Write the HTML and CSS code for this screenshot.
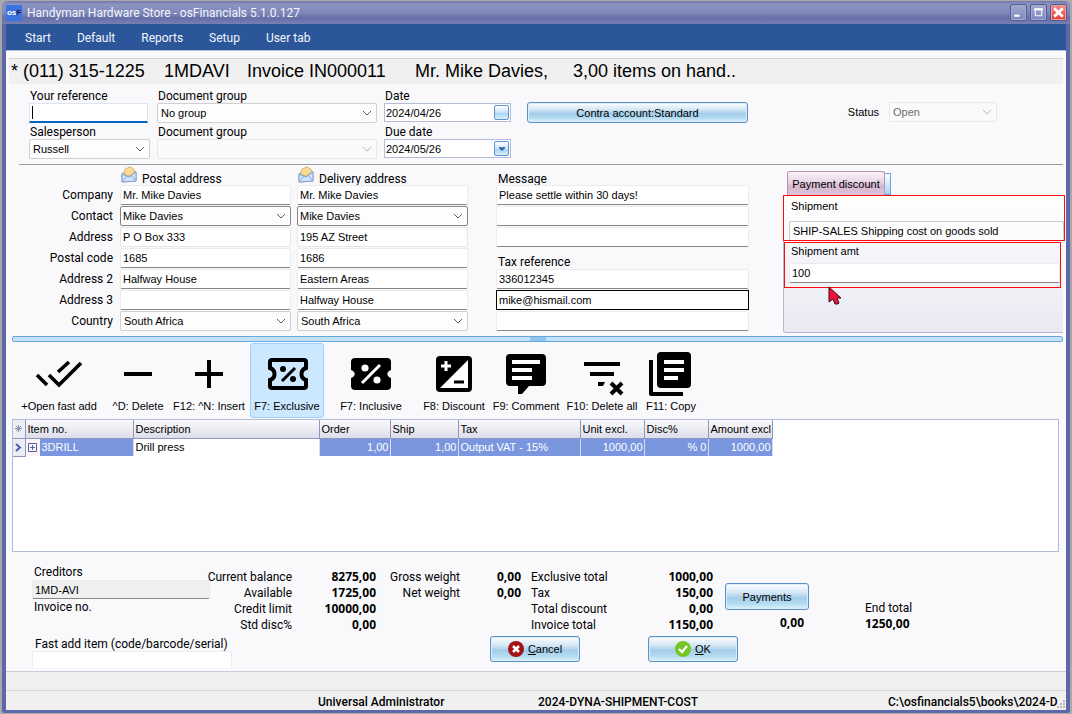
FILE: index.html
```html
<!DOCTYPE html>
<html lang="en">
<head>
<meta charset="utf-8">
<title>Handyman Hardware Store - osFinancials 5.1.0.127</title>
<link rel="stylesheet" href="styles.css">
</head>
<body>
<div class="window">
  <header class="titlebar">
    <span class="app-icon">os<b>F</b></span>
    <h1 class="title">Handyman Hardware Store - osFinancials 5.1.0.127</h1>
    <div class="win-buttons">
      <button class="win-btn" aria-label="Minimize"><svg viewBox="0 0 14 14"><path d="M3 9h5v2H3z" fill="#fff"/></svg></button>
      <button class="win-btn" aria-label="Maximize"><svg viewBox="0 0 14 14"><path d="M4 4h6v6H4z" fill="none" stroke="#fff"/><path d="M3 3h8v2H3z" fill="#fff"/></svg></button>
      <button class="win-btn win-close" aria-label="Close"><svg viewBox="0 0 14 14"><path d="M3 3l8 8M11 3l-8 8" stroke="#fff" stroke-width="2.6"/></svg></button>
    </div>
  </header>
  <nav class="menu">
    <button>Start</button><button>Default</button><button>Reports</button><button>Setup</button><button>User tab</button>
  </nav>

  <main class="content">
    <h2 class="summary-line"><span>*</span><span>(011) 315-1225</span><span>1MDAVI</span><span>Invoice IN000011</span><span>Mr. Mike Davies,</span><span>3,00 items on hand..</span></h2>

    <section class="doc-head">
      <div class="stack">
        <label for="ref">Your reference</label>
        <div class="focus-box"><i class="caret"></i><input id="ref" type="text"></div>
        <label for="sales">Salesperson</label>
        <select id="sales"><option>Russell</option></select>
      </div>
      <div class="stack">
        <label for="grp1">Document group</label>
        <select id="grp1"><option>No group</option></select>
        <label for="grp2">Document group</label>
        <select id="grp2" disabled><option></option></select>
      </div>
      <div class="stack">
        <label for="date">Date</label>
        <div class="date"><input id="date" type="text" value="2024/04/26"><button aria-label="Pick date"></button></div>
        <label for="due">Due date</label>
        <div class="date"><input id="due" type="text" value="2024/05/26"><button aria-label="Pick due date"><svg viewBox="0 0 8 8"><path d="M1 2h2l1 1 1-1h2v1L4 6 1 3z" fill="#2466ad"/></svg></button></div>
      </div>
      <button class="glass contra">Contra account:Standard</button>
      <div class="status">
        <label for="status">Status</label>
        <select id="status" disabled><option>Open</option></select>
      </div>
    </section>

    <section class="address">
      <div class="rows row-labels">
        <span></span>
        <label for="p1">Company</label><label for="p2">Contact</label><label for="p3">Address</label><label for="p4">Postal code</label><label for="p5">Address 2</label><label for="p6">Address 3</label><label for="p7">Country</label>
      </div>
      <div class="rows">
        <h3 class="addr-title"><svg viewBox="0 0 16 17"><path d="M1 8l7-7 7 5v9l-14 1z" fill="#b9d0f0" stroke="#8f9fcf"/><path d="M3 8l1-5 5-2 4 2v4L8 10z" fill="#fbdc95" stroke="#dcae5c" stroke-width=".8"/><path d="M1 8l7 3 7-5v9l-14 1z" fill="#cfe6fa" stroke="#8a9cce"/><path d="M2 15l4-5M14 14l-4-5" stroke="#7aa9dd"/></svg>Postal address</h3>
        <input id="p1" type="text" value="Mr. Mike Davies">
        <select id="p2" class="dark"><option>Mike Davies</option></select>
        <input id="p3" class="light" type="text" value="P O Box 333">
        <input id="p4" type="text" value="1685">
        <input id="p5" type="text" value="Halfway House">
        <input id="p6" type="text">
        <select id="p7"><option>South Africa</option></select>
      </div>
      <div class="rows">
        <h3 class="addr-title"><svg viewBox="0 0 16 17"><path d="M1 8l7-7 7 5v9l-14 1z" fill="#b9d0f0" stroke="#8f9fcf"/><path d="M3 8l1-5 5-2 4 2v4L8 10z" fill="#fbdc95" stroke="#dcae5c" stroke-width=".8"/><path d="M1 8l7 3 7-5v9l-14 1z" fill="#cfe6fa" stroke="#8a9cce"/><path d="M2 15l4-5M14 14l-4-5" stroke="#7aa9dd"/></svg>Delivery address</h3>
        <input type="text" aria-label="Delivery company" value="Mr. Mike Davies">
        <select class="dark" aria-label="Delivery contact"><option>Mike Davies</option></select>
        <input class="light" type="text" aria-label="Delivery address" value="195 AZ Street">
        <input type="text" aria-label="Delivery postal code" value="1686">
        <input type="text" aria-label="Delivery address 2" value="Eastern Areas">
        <input type="text" aria-label="Delivery address 3" value="Halfway House">
        <select aria-label="Delivery country"><option>South Africa</option></select>
      </div>
      <div class="rows message">
        <label class="msg-label" for="msg">Message</label>
        <input id="msg" type="text" value="Please settle within 30 days!">
        <input type="text" aria-label="Message line 2">
        <input type="text" aria-label="Message line 3">
        <label class="msg-label" for="tax">Tax reference</label>
        <input id="tax" type="text" value="336012345">
        <input class="boxed" type="text" aria-label="E-mail" value="mike@hismail.com">
        <input type="text" aria-label="Extra reference">
      </div>
      <div class="discount">
        <div class="tabs"><button class="tab">Payment discount</button><i class="tab-next"></i></div>
        <div class="panel">
          <div class="marked marked-wide"><label for="ship">Shipment</label><input id="ship" class="flat" type="text" value="SHIP-SALES Shipping cost on goods sold"></div>
          <div class="marked marked-short"><label for="amt">Shipment amt</label><input id="amt" type="text" value="100"></div>
          <svg class="cursor" viewBox="0 0 14 20"><path d="M1 1v15l4-3 2 5h3l1-1-2-5h4z" fill="#f5103c" stroke="#301018"/></svg>
        </div>
      </div>
    </section>

    <div class="splitter"><i></i></div>

    <div class="toolbar">
      <button class="w98"><svg viewBox="0 0 48 48"><path d="M2 25l10 10M14 25l10 10L46 13M23 22l11-10" fill="none" stroke="#000" stroke-width="3.6"/></svg>+Open fast add</button>
      <button class="w60"><svg viewBox="0 0 48 48"><path d="M10 22h28v4H10z"/></svg>^D: Delete</button>
      <button class="w82"><svg viewBox="0 0 48 48"><path d="M10 22h12V10h4v12h12v4H26v12h-4V26H10z"/></svg>F12: ^N: Insert</button>
      <button class="w74 active"><svg viewBox="0 0 48 48"><path d="M9 10h32a2 2 0 0 1 2 2v6c-6 2-6 10 0 12v6a2 2 0 0 1-2 2H9a2 2 0 0 1-2-2v-6c6-2 6-10 0-12v-6a2 2 0 0 1 2-2z" fill="none" stroke="#000" stroke-width="4"/><path d="M19 31l13-13" stroke="#000" stroke-width="3"/><circle cx="20" cy="19" r="3"/><circle cx="30" cy="29" r="3"/></svg>F7: Exclusive</button>
      <button class="w94"><svg viewBox="0 0 48 48"><path d="M8 8h32a4 4 0 0 1 4 4v8c-5 2-5 6 0 8v8a4 4 0 0 1-4 4H8a4 4 0 0 1-4-4v-8c5-2 5-6 0-8v-8a4 4 0 0 1 4-4z"/><path d="M15 33l18-18" stroke="#fff" stroke-width="3"/><circle cx="18" cy="18" r="3.6" fill="#fff"/><circle cx="30" cy="30" r="3.6" fill="#fff"/></svg>F7: Inclusive</button>
      <button class="w72"><svg viewBox="0 0 48 48"><rect x="6" y="6" width="36" height="36" rx="4"/><path d="M38 10v28H10z" fill="#fff"/><path d="M11 16h10M16 11v10" stroke="#fff" stroke-width="3"/><path d="M24 32h10" stroke="#000" stroke-width="3"/></svg>F8: Discount</button>
      <button class="w72"><svg viewBox="0 0 48 48"><path d="M8 4h32a4 4 0 0 1 4 4v24a4 4 0 0 1-4 4H27l-7 8h-4v-8H8a4 4 0 0 1-4-4V8a4 4 0 0 1 4-4z"/><path d="M10 10h28v4H10zM10 18h20v4H10zM10 26h20v4H10z" fill="#fff"/></svg>F9: Comment</button>
      <button class="w80"><svg viewBox="0 0 48 48"><path d="M6 12h36v4H6zM12 22h24v4H12zM20 32h7l-2 4h-5z"/><path d="M33 33l11 11M44 33L33 44" stroke="#000" stroke-width="4"/></svg>F10: Delete all</button>
      <button class="w58"><svg viewBox="0 0 48 48"><path d="M14 2h26a4 4 0 0 1 4 4v28a4 4 0 0 1-4 4H14a4 4 0 0 1-4-4V6a4 4 0 0 1 4-4z"/><path d="M2 10h4v32h30v4H4a2 2 0 0 1-2-2z"/><path d="M17 10h20v4H17zM17 18h20v4H17zM17 26h14v4H17z" fill="#fff"/></svg>F11: Copy</button>
    </div>

    <div class="grid-area">
      <table class="items">
        <colgroup><col class="c-mark"><col class="c-item"><col class="c-desc"><col class="c-order"><col class="c-ship"><col class="c-tax"><col class="c-unit"><col class="c-disc"><col class="c-amt"></colgroup>
        <thead><tr><th class="mark"><svg viewBox="0 0 9 9"><path d="M4.5 1v7M1 4.5h7M2 2l5 5M7 2l-5 5" stroke="#8d93ad"/></svg></th><th>Item no.</th><th>Description</th><th>Order</th><th>Ship</th><th>Tax</th><th>Unit excl.</th><th>Disc%</th><th>Amount excl</th></tr></thead>
        <tbody><tr><td class="mark"><svg viewBox="0 0 9 9"><path d="M2 1l4 3.500L2 8" fill="none" stroke="#4a5fb0" stroke-width="2"/></svg></td><td class="item"><span class="item-cell"><button class="expand" aria-label="Expand"><svg viewBox="0 0 9 9"><path d="M.5.5h8v8h-8zM2 4.5h5M4.5 2v5" fill="none" stroke="#5a5f9a"/></svg></button><span>3DRILL</span></span></td><td class="desc">Drill press</td><td class="num">1,00</td><td class="num">1,00</td><td>Output VAT - 15%</td><td class="num">1000,00</td><td class="num">% 0</td><td class="num">1000,00</td></tr></tbody>
      </table>
    </div>

    <section class="totals">
      <div class="creditor">
        <label for="cred">Creditors</label>
        <input id="cred" type="text" value="1MD-AVI" readonly>
        <span>Invoice no.</span>
      </div>
      <dl class="balance"><dt>Current balance</dt><dd>8275,00</dd><dt>Available</dt><dd>1725,00</dd><dt>Credit limit</dt><dd>10000,00</dd><dt>Std disc%</dt><dd>0,00</dd></dl>
      <dl class="weights"><dt>Gross weight</dt><dd>0,00</dd><dt>Net weight</dt><dd>0,00</dd></dl>
      <dl class="amounts"><dt>Exclusive total</dt><dd>1000,00</dd><dt>Tax</dt><dd>150,00</dd><dt>Total discount</dt><dd>0,00</dd><dt>Invoice total</dt><dd>1150,00</dd></dl>
      <div class="payments"><button class="glass">Payments</button><b>0,00</b></div>
      <div class="end-total"><span>End total</span><b>1250,00</b></div>
    </section>

    <section class="actions">
      <div class="fast-add"><label for="fast">Fast add item (code/barcode/serial)</label><input id="fast" type="text"></div>
      <button class="glass"><svg viewBox="0 0 16 16"><circle cx="8" cy="8" r="8" fill="#a31316"/><path d="M5 5l6 6M11 5l-6 6" stroke="#fff" stroke-width="2.6"/></svg><span><u>C</u>ancel</span></button>
      <button class="glass"><svg viewBox="0 0 16 16"><circle cx="8" cy="8" r="8" fill="#76c626"/><path d="M4 8l3 3 5-6" fill="none" stroke="#fff" stroke-width="2.2"/></svg><span><u>O</u>K</span></button>
    </section>
  </main>

  <footer class="statusbar">
    <div class="hint"></div>
    <div class="info"><span>Universal Administrator</span><span>2024-DYNA-SHIPMENT-COST</span><span>C:\osfinancials5\books\2024-D</span>
      <svg class="grip" viewBox="0 0 9 9"><path d="M6 0h2v2H6zM3 3h2v2H3zM6 3h2v2H6zM0 6h2v2H0zM3 6h2v2H3zM6 6h2v2H6z" fill="#b8b8b8"/></svg></div>
  </footer>
</div>
</body>
</html>
```

FILE: styles.css
```css
* { box-sizing: border-box; }
body {
  margin: 0;
  padding: 1px 2px;
  height: 100vh;
  background: #a9a9ad;
  color: #000;
  font: 12px/14px Roboto, "Noto Sans", sans-serif;
  overflow: hidden;
}
button, input, select { font: 11px/14px "Liberation Sans", Arial, sans-serif; color: #000; margin: 0; }
button { border: 0; padding: 0; background: none; }
h1, h2, h3, dl, dd { margin: 0; font-weight: normal; }

.window {
  height: 100%;
  display: flex;
  flex-direction: column;
  border: solid #5c68a8;
  border-width: 0 4px 3px;
  border-radius: 6px 6px 3px 3px;
  background: #f9f9fc;
}

.titlebar {
  height: 23px;
  flex: none;
  margin: 0 -4px;
  padding: 0 3px 0 4px;
  display: flex;
  align-items: center;
  gap: 5px;
  border-radius: 6px 6px 0 0;
  background: linear-gradient(#7079ab, #8c94c1 15%, #7f88b9 50%, #656fa8 75%, #7780b2);
}
.app-icon {
  width: 16px;
  height: 16px;
  background: #3d72e0;
  color: #fff;
  font: bold 8px/16px "Liberation Sans", Arial, sans-serif;
  text-align: center;
}
.app-icon b { color: #101c50; }
.title { flex: 1; color: #f4f5fc; font-size: 12px; }
.win-buttons { display: flex; gap: 3px; }
.win-btn { width: 17px; height: 17px; border: 1px solid #525c99; border-radius: 2px; background: linear-gradient(#a2a9d0, #7c86ba); box-shadow: inset 0 0 0 1px #a3aad1; }
.win-btn svg { display: block; width: 15px; height: 15px; }
.win-close { background: linear-gradient(#f58d88, #e33a35); box-shadow: inset 0 0 0 1px #f39a94; }

.menu { height: 26px; flex: none; display: flex; gap: 26px; padding: 1px 0 0 19px; background: #2b579a; }
.menu button { color: #f2f5fa; font: 12px/26px Roboto, "Noto Sans", sans-serif; }

.content {
  flex: 1;
  min-height: 0;
  display: flex;
  flex-direction: column;
  padding: 7px 3px 0;
  border-top: 1px solid #b9c0dc;
}
.summary-line {
  display: grid;
  grid-template-columns: 12px 141px 83px 168px 158px 1fr;
  padding-left: 2px;
  border-top: 1px solid #d4d4d4;
  background: #f0f0f0;
  font: 18px/25px "Liberation Sans", Arial, sans-serif;
  white-space: nowrap;
}

input, select {
  width: 100%;
  height: 20px;
  padding: 0 2px;
  border: 1px solid #ececec;
  border-bottom-color: #868686;
  border-radius: 2px;
  background-color: #fff;
  outline: 0;
}
select {
  appearance: none;
  padding: 0 20px 0 3px;
  border-color: #d0d0d0;
  background: #fdfdfd url("data:image/svg+xml,%3Csvg xmlns='http://www.w3.org/2000/svg' width='10' height='6'%3E%3Cpath d='M1 1l4 4 4-4' fill='none' stroke='%23606060'/%3E%3C/svg%3E") no-repeat right 4px center;
}
select.dark { border-color: #868686; padding-left: 2px; }
select:disabled {
  color: #6d6d6d;
  opacity: 1;
  border-color: #e8e8e8;
  background-color: #fafafa;
  background-image: url("data:image/svg+xml,%3Csvg xmlns='http://www.w3.org/2000/svg' width='10' height='6'%3E%3Cpath d='M1 1l4 4 4-4' fill='none' stroke='%23b8b8b8'/%3E%3C/svg%3E");
}
input.light { border-color: #e6e6e6; }

.glass {
  display: flex;
  align-items: center;
  justify-content: center;
  gap: 4px;
  border: 1px solid #5b8fc7;
  border-radius: 3px;
  background: linear-gradient(#fff, #d3e6f5 35%, #b3d4ec 50%, #a3cde9 55%, #b4dcf2 80%, #dcf3fc);
  box-shadow: inset 0 0 0 1px #dceefa;
}
.glass svg { width: 16px; height: 16px; }

.doc-head {
  display: grid;
  grid-template-columns: 121px 220px 127px 221px 1fr;
  column-gap: 7px;
  margin-left: 10px;
  padding: 5px 66px 5px 10px;
  border-bottom: 1px solid #9b9b9b;
}
.stack { display: grid; grid-template-rows: 14px 20px 16px 20px; }
.stack label { padding-left: 1px; align-self: end; }
.focus-box { display: flex; align-items: center; background: #fff; border: 1px solid #dce6f0; border-bottom: 2px solid #0067c0; width: 119px; padding-left: 2px; }
.focus-box input { border: 0; height: 16px; background: none; }
.caret { width: 1px; height: 13px; background: #000; }
.date { display: flex; align-items: center; border: 1px solid #b4bcdc; background: #fff; height: 19px; padding-right: 1px; }
.date input { border: 0; height: 16px; padding-left: 1px; background: none; }
.date button { flex: none; width: 15px; height: 15px; border: 1px solid #5c97cf; border-radius: 2px; background: linear-gradient(#fff, #cbe2f6 50%, #a8d2f2 55%, #d7eefc); }
.date svg { display: block; width: 8px; height: 8px; margin: auto; }
.contra { height: 21px; margin: 13px 0 0 9px; width: 221px; }
.status { display: flex; justify-content: flex-end; align-items: center; height: 20px; margin-top: 13px; gap: 10px; }
.status label { font: 11px/14px "Liberation Sans", Arial, sans-serif; }
.status select { width: 108px; }

.address { display: grid; grid-template-columns: 105px 171fr 171fr 269fr 314fr; column-gap: 6px; height: 171px; }
.rows { display: grid; grid-template-rows: 20px repeat(7, 21px); }
.row-labels { text-align: right; padding-right: 1px; line-height: 21px; }
.addr-title { display: flex; align-items: flex-end; gap: 5px; padding-left: 1px; font-size: 12px; line-height: 11px; }
.addr-title svg { width: 16px; height: 17px; margin-bottom: 2px; }
.message { padding-left: 22px; margin-right: -6px; }
.msg-label { padding: 7px 0 0 2px; line-height: 14px; }
.boxed { border: 1px solid #000; border-radius: 0; }
.discount { display: flex; flex-direction: column; padding: 5px 0 3px 34px; margin-right: -2px; }
.tabs { display: flex; align-items: flex-end; height: 25px; padding-left: 4px; }
.tab { width: 98px; height: 24px; border: 1px solid #b98fb2; border-bottom: 0; border-radius: 3px 3px 0 0; background: linear-gradient(#fbf4fa, #e7d3e4 45%, #d6b8d1 60%, #dcc2d8); }
.tab-next { width: 6px; height: 22px; border: 1px solid #6fa6d8; border-left: 0; background: linear-gradient(#fff, #a8d3f3); }
.panel { position: relative; flex: 1; margin-right: 2px; border: 1px solid #b4b8cf; border-top: 0; border-right: 0; border-radius: 3px 0 0 3px; background: linear-gradient(#fff, #e9e9f2); }
.marked { height: 46px; border: 1px solid #fb0a0e; padding: 2px 0 0 5px; }
.marked label { display: block; padding-left: 2px; margin-bottom: 7px; font: 11px/16px "Liberation Sans", Arial, sans-serif; }
.marked-wide { margin-right: -2px; margin-left: -1px; margin-bottom: 1px; }
.marked-short { margin-right: 2px; padding-left: 4px; padding-top: 0; }
.marked-short label { margin-bottom: 4px; }
.flat { height: 19px; border-color: #c8c8c8; border-bottom: 0; background: #fcfcfd; padding-left: 3px; }
.cursor { position: absolute; left: 44px; top: 91px; width: 14px; height: 20px; }

.splitter { flex: none; height: 6px; margin-left: 3px; border: 1px solid #68a9dc; border-radius: 2px; background: #c4e2f7; display: flex; justify-content: center; }
.splitter i { width: 16px; background: #8fc4ef; }

.toolbar { flex: none; display: flex; height: 77px; padding: 1px 0 1px 1px; }
.toolbar button { display: flex; flex-direction: column; align-items: center; padding-top: 6px; white-space: nowrap; border: 1px solid transparent; border-radius: 3px; }
.toolbar svg { width: 48px; height: 48px; flex: none; margin-bottom: 1px; }
.toolbar .active { background: #cce8ff; border-color: #99d1ff; }
.w58 { width: 58px; }
.w60 { width: 60px; }
.w72 { width: 72px; }
.w74 { width: 74px; }
.w80 { width: 80px; }
.w82 { width: 82px; }
.w94 { width: 94px; }
.w98 { width: 98px; }

.grid-area { flex: 1; min-height: 60px; margin: 0 4px 0 3px; border: 1px solid #b4bcdc; background: #fff; }
.items { table-layout: fixed; width: 759px; border-collapse: collapse; font: 11px/16px "Liberation Sans", Arial, sans-serif; }
.items th, .items td { height: 18px; padding: 0 2px; white-space: nowrap; overflow: hidden; }
.items th { text-align: left; font-weight: normal; border-right: 1px solid #8f96be; border-bottom: 1px solid #8f96be; background: linear-gradient(#fafafc, #dcdde9); }
.items td { border-right: 1px solid #d6dcf2; background: #7a96df; color: #fff; }
.items .mark { padding: 0; text-align: center; background: #ecedf5; border-right: 1px solid #8f96be; border-bottom: 1px solid #8f96be; }
.items svg { display: block; width: 9px; height: 9px; margin: auto; }
.items .item { padding: 0; }
.item-cell { display: flex; align-items: center; }
.item-cell span { padding-left: 2px; }
.expand { width: 14px; height: 17px; background: #fbf4fa; }
.items .desc { background: #fff; color: #000; }
.items .num { text-align: right; padding-right: 1px; }
.c-mark { width: 12px; }
.c-item { width: 108px; }
.c-desc { width: 186px; }
.c-order { width: 71px; }
.c-ship { width: 68px; }
.c-tax { width: 122px; }
.c-unit { width: 64px; }
.c-disc { width: 64px; }
.c-amt { width: 64px; }

.totals { flex: none; display: flex; height: 84px; padding: 17px 0 0 23px; line-height: 16px; }
.creditor { width: 178px; margin-top: -5px; }
.creditor label, .creditor span { display: block; padding-left: 2px; }
.creditor label { line-height: 16px; }
.creditor input { background: #f0f0f0; height: 19px; display: block; }
.totals dl { display: grid; grid-auto-rows: 16px; align-content: start; white-space: nowrap; }
.totals dd, .totals b { font: bold 12px/16px "Open Sans", "Noto Sans", sans-serif; text-align: right; }
.balance { width: 166px; grid-template-columns: 82px 84px; }
.balance dt { display: flex; justify-content: flex-end; }
.weights { width: 145px; grid-template-columns: 84px 61px; text-align: right; }
.amounts { margin-left: 10px; width: 182px; grid-template-columns: 1fr auto; }
.payments { width: 84px; margin-left: 12px; padding-top: 14px; display: flex; flex-direction: column; gap: 5px; }
.payments .glass { width: 84px; height: 27px; }
.payments b { padding-right: 5px; }
.end-total { margin-left: 56px; padding-top: 31px; display: flex; flex-direction: column; }
.totals .end-total b { text-align: left; }

.actions { flex: none; display: flex; height: 35px; padding-left: 23px; overflow: hidden; }
.fast-add { width: 200px; margin-right: 258px; }
.fast-add label { display: block; line-height: 14px; padding: 1px 0 0 3px; white-space: nowrap; }
.fast-add input { height: 17px; border-bottom: 0; display: block; }
.actions .glass { width: 90px; height: 26px; }
.actions .glass + .glass { margin-left: 68px; }

.statusbar { flex: none; height: 39px; border-top: 1px solid #c9cbd8; background: #f0f0f0; }
.hint { height: 19px; border-bottom: 1px solid #d7d7d7; }
.info { position: relative; height: 19px; display: grid; grid-template-columns: 312fr 220fr 350fr 178fr; font-weight: 500; line-height: 22px; white-space: nowrap; }
.info span:first-child { grid-column: 2; }
.grip { position: absolute; right: 0; bottom: 1px; width: 9px; height: 9px; }
```
